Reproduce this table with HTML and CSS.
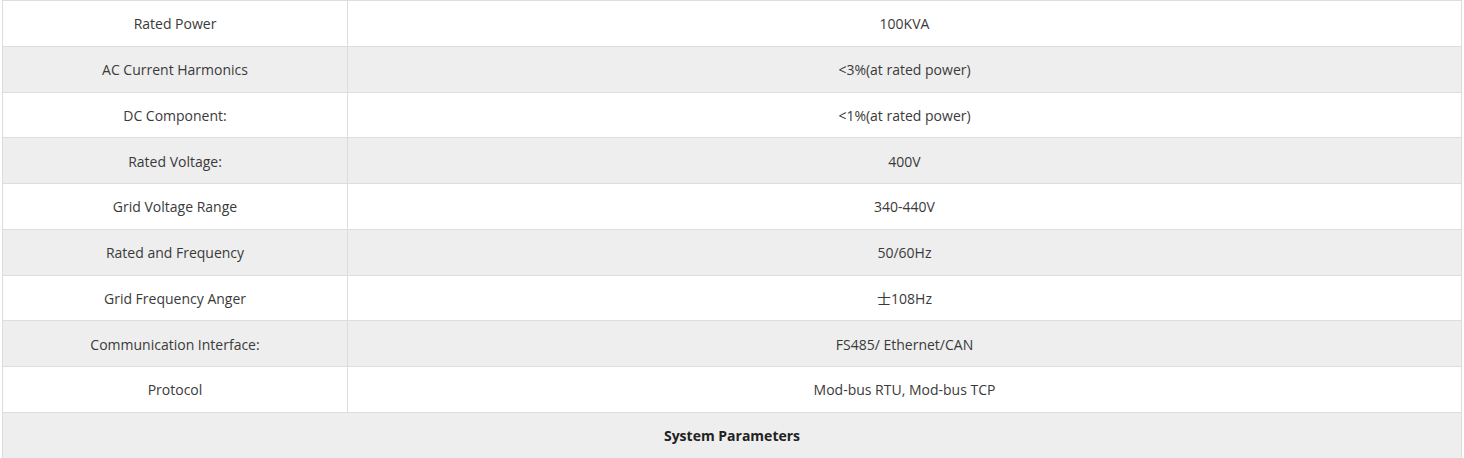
FILE: index.html
```html
<!DOCTYPE html>
<html>
<head>
<meta charset="utf-8">
<link rel="stylesheet" href="styles.css">
</head>
<body>
<table class="spec">
  <tr><td class="k">Rated Power</td><td class="v">100KVA</td></tr>
  <tr><td class="k">AC Current Harmonics</td><td class="v">&lt;3%(at rated power)</td></tr>
  <tr><td class="k">DC Component:</td><td class="v">&lt;1%(at rated power)</td></tr>
  <tr><td class="k">Rated Voltage:</td><td class="v">400V</td></tr>
  <tr><td class="k">Grid Voltage Range</td><td class="v">340-440V</td></tr>
  <tr><td class="k">Rated and Frequency</td><td class="v">50/60Hz</td></tr>
  <tr><td class="k">Grid Frequency Anger</td><td class="v">士108Hz</td></tr>
  <tr><td class="k">Communication Interface:</td><td class="v">FS485/ Ethernet/CAN</td></tr>
  <tr><td class="k">Protocol</td><td class="v">Mod-bus RTU, Mod-bus TCP</td></tr>
  <tr><td class="head" colspan="2">System Parameters</td></tr>
</table>
</body>
</html>
```
FILE: styles.css
```css
html, body {
  margin: 0;
  padding: 0;
  background: #fff;
}
body {
  padding: 0 2px;
  font-family: "Open Sans", "Noto Sans CJK SC", sans-serif;
  font-size: 14px;
  color: #3a3a3a;
}
.spec {
  width: 1460px;
  border-collapse: collapse;
  table-layout: fixed;
}
.spec td {
  border: 1px solid #ddd;
  height: 45.75px;
  padding: 1px 8px 0;
  text-align: center;
  vertical-align: middle;
  box-sizing: border-box;
}
.spec .k {
  width: 345px;
}
.spec tr:nth-child(even) td {
  background: #eee;
}
.spec .head {
  font-weight: bold;
  color: #222;
}
```
